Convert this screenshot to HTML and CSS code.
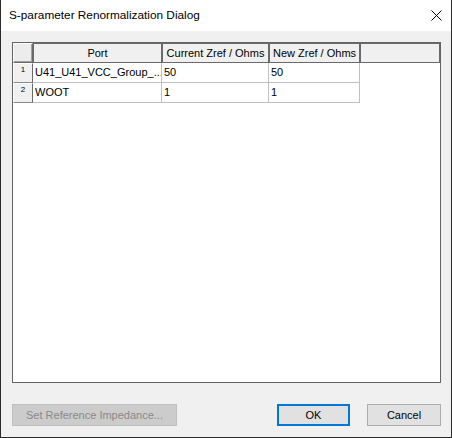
FILE: index.html
```html
<!DOCTYPE html>
<html>
<head>
<meta charset="utf-8">
<link rel="stylesheet" href="styles.css">
</head>
<body>
<div class="window">
  <div class="titlebar">
    <span class="title">S-parameter Renormalization Dialog</span>
    <svg class="close" width="11" height="11" viewBox="0 0 11 11"><path d="M0.5 0.5 L10.5 10.5 M10.5 0.5 L0.5 10.5" stroke="#000" stroke-width="1" fill="none"/></svg>
  </div>
  <div class="content">
    <div class="grid">
      <div class="hrow">
        <div class="hcell corner"></div>
        <div class="hcell c-port">Port</div>
        <div class="hcell c-cur">Current Zref / Ohms</div>
        <div class="hcell c-new">New Zref / Ohms</div>
        <div class="hcell c-fill"></div>
      </div>
      <div class="drow">
        <div class="rhead">1</div>
        <div class="dcell c-port">U41_U41_VCC_Group_...</div>
        <div class="dcell c-cur">50</div>
        <div class="dcell c-new">50</div>
      </div>
      <div class="drow">
        <div class="rhead">2</div>
        <div class="dcell c-port">WOOT</div>
        <div class="dcell c-cur">1</div>
        <div class="dcell c-new">1</div>
      </div>
    </div>
    <div class="buttons">
      <div class="btn disabled">Set Reference Impedance...</div>
      <div class="spacer"></div>
      <div class="btn ok">OK</div>
      <div class="btn cancel">Cancel</div>
    </div>
  </div>
</div>
</body>
</html>
```

FILE: styles.css
```css
html, body {
  margin: 0;
  padding: 0;
}
body {
  font-family: "Liberation Sans", Arial, sans-serif;
  font-size: 11px;
  color: #000;
  background: #fff;
}
.window {
  width: 452px;
  height: 438px;
  box-sizing: border-box;
  border: 1px solid #2b2b2b;
  border-top: none;
  display: flex;
  flex-direction: column;
  background: #f0f0f0;
}
.titlebar {
  height: 31px;
  flex: none;
  background: #fff;
  display: flex;
  align-items: center;
  padding-left: 8px;
  padding-right: 9px;
}
.title {
  flex: 1;
  font-size: 11.8px;
  color: #000;
  padding-bottom: 1px;
}
.close {
  display: block;
  margin-bottom: 1px;
}
.content {
  flex: 1;
  display: flex;
  flex-direction: column;
  padding: 11px 10px 11px 11px;
}
.grid {
  flex: 1;
  background: #fff;
  border: 1px solid #646464;
  display: flex;
  flex-direction: column;
}
.hrow, .drow {
  display: flex;
  height: 20px;
  flex: none;
}
.hcell {
  box-sizing: border-box;
  height: 20px;
  background: #f0f0f0;
  border: 1px solid #6a6a6a;
  text-align: center;
  line-height: 18px;
  white-space: nowrap;
  overflow: hidden;
}
.corner {
  width: 20px;
  background: #ececec;
  border-color: #fafafa #6a6a6a #6a6a6a #fafafa;
  box-shadow: inset -1px -1px 0 #a0a0a0;
}
.c-port { width: 129px; }
.c-cur { width: 107px; }
.c-new { width: 91px; }
.c-fill { flex: 1; }
.rhead {
  box-sizing: border-box;
  width: 20px;
  height: 20px;
  background: #f0f0f0;
  border-style: solid;
  border-width: 1px;
  border-color: #fcfcfc #6a6a6a #8a8a8a #fcfcfc;
  font-size: 8px;
  text-align: center;
  line-height: 10px;
  padding-top: 1px;
}
.dcell {
  box-sizing: border-box;
  height: 20px;
  border-right: 1px solid #c0c0c0;
  border-bottom: 1px solid #c0c0c0;
  padding-left: 2px;
  line-height: 19px;
  white-space: nowrap;
  overflow: hidden;
}
.buttons {
  display: flex;
  margin-top: 21px;
  height: 22px;
  flex: none;
}
.spacer { flex: 1; }
.btn {
  box-sizing: border-box;
  height: 22px;
  border: 1px solid #adadad;
  background: #e1e1e1;
  text-align: center;
  line-height: 20px;
}
.btn.disabled {
  width: 165px;
  background: #cccccc;
  border-color: #bfbfbf;
  color: #8a8a8a;
}
.btn.ok {
  width: 73px;
  border: 2px solid #0078d7;
  line-height: 18px;
}
.btn.cancel {
  width: 74px;
  margin-left: 17px;
}
```
